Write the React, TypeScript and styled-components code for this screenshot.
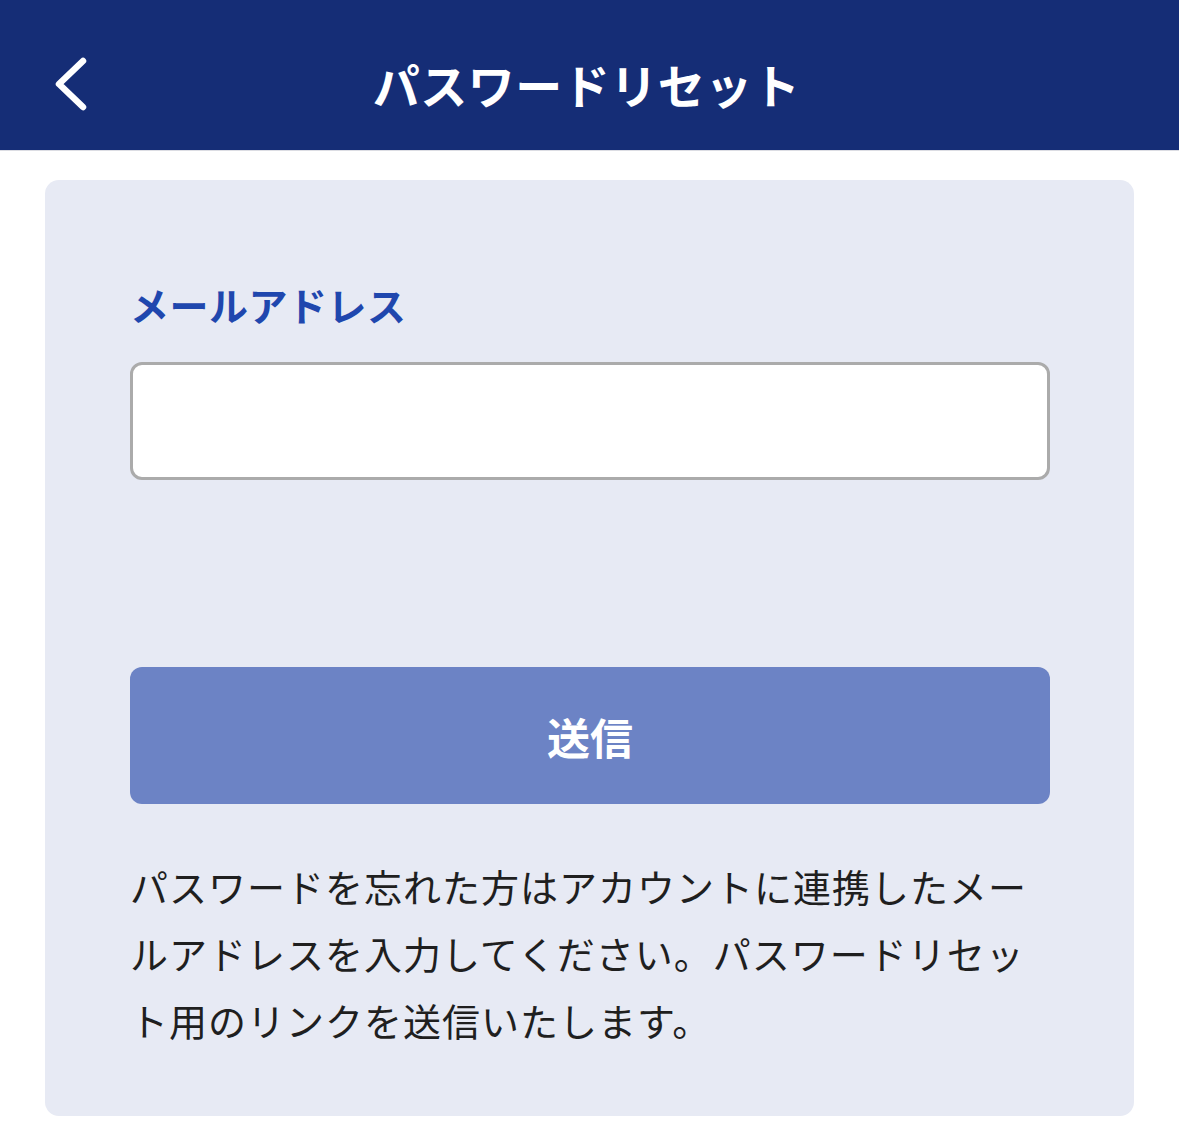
import React, { useState } from "react";
import styled, { createGlobalStyle } from "styled-components";

const GlobalStyle = createGlobalStyle`
  html, body {
    margin: 0;
    padding: 0;
    background: #ffffff;
  }
  body {
    font-family: "Noto Sans CJK JP", "Noto Sans", sans-serif;
  }
  * {
    box-sizing: border-box;
  }
`;

const BackIcon = () => (
  <svg width="40" height="60" viewBox="0 0 40 60" fill="none">
    <path
      d="M33 7 L9 30 L33 53"
      stroke="#ffffff"
      strokeWidth="6.5"
      strokeLinecap="round"
      strokeLinejoin="round"
    />
  </svg>
);

const App = () => {
  const [email, setEmail] = useState("");

  const emailHandler = (event: React.ChangeEvent<HTMLInputElement>) => {
    setEmail(event.target.value);
  };

  return (
    <Wrapper>
      <GlobalStyle />
      <Header>
        <BackButton aria-label="戻る">
          <BackIcon />
        </BackButton>
        <HeaderTitle>パスワードリセット</HeaderTitle>
      </Header>
      <Body>
        <Card>
          <Label htmlFor="email">メールアドレス</Label>
          <Input id="email" type="email" value={email} onChange={emailHandler} />
          <SubmitButton disabled={email === ""}>送信</SubmitButton>
          <Note>
            パスワードを忘れた方はアカウントに連携したメールアドレスを入力してください。パスワードリセット用のリンクを送信いたします。
          </Note>
        </Card>
      </Body>
    </Wrapper>
  );
};

const Wrapper = styled.div`
  width: 100%;
  min-height: 100vh;
  background: #ffffff;
`;

const Header = styled.header`
  position: relative;
  display: flex;
  align-items: center;
  justify-content: center;
  height: 151px;
  padding-top: 16px;
  background: #152d76;
  border-bottom: 1px solid #dcdde3;
`;

const BackButton = styled.button`
  position: absolute;
  left: 50px;
  top: 54px;
  display: flex;
  align-items: center;
  justify-content: center;
  padding: 0;
  border: none;
  background: transparent;
  cursor: pointer;
`;

const HeaderTitle = styled.h1`
  margin: 0 6px 0 0;
  color: #ffffff;
  font-size: 47px;
  font-weight: 700;
  letter-spacing: 0.5px;
  line-height: 1;
`;

const Body = styled.main`
  padding: 29px 45px 23px 45px;
`;

const Card = styled.section`
  display: flex;
  flex-direction: column;
  padding: 96px 84px 63px 85px;
  background: #e7eaf4;
  border-radius: 14px;
`;

const Label = styled.label`
  color: #1f47ae;
  font-size: 39px;
  font-weight: 700;
  line-height: 56px;
  letter-spacing: 0.5px;
`;

const Input = styled.input`
  width: 100%;
  height: 118px;
  margin-top: 30px;
  padding: 0 24px;
  border: 3px solid #ababab;
  border-radius: 12px;
  background: #ffffff;
  font-size: 36px;
  outline: none;
`;

const SubmitButton = styled.button`
  width: 100%;
  height: 137px;
  margin-top: 187px;
  border: none;
  border-radius: 12px;
  background: #6c83c5;
  color: #ffffff;
  font-family: "Noto Sans CJK JP", "Noto Sans", sans-serif;
  font-size: 43px;
  font-weight: 700;
  cursor: pointer;
`;

const Note = styled.p`
  margin: 48px 0 0 0;
  color: #1f1f1f;
  font-size: 38px;
  font-weight: 400;
  line-height: 67px;
  letter-spacing: 1px;
`;

export default App;
